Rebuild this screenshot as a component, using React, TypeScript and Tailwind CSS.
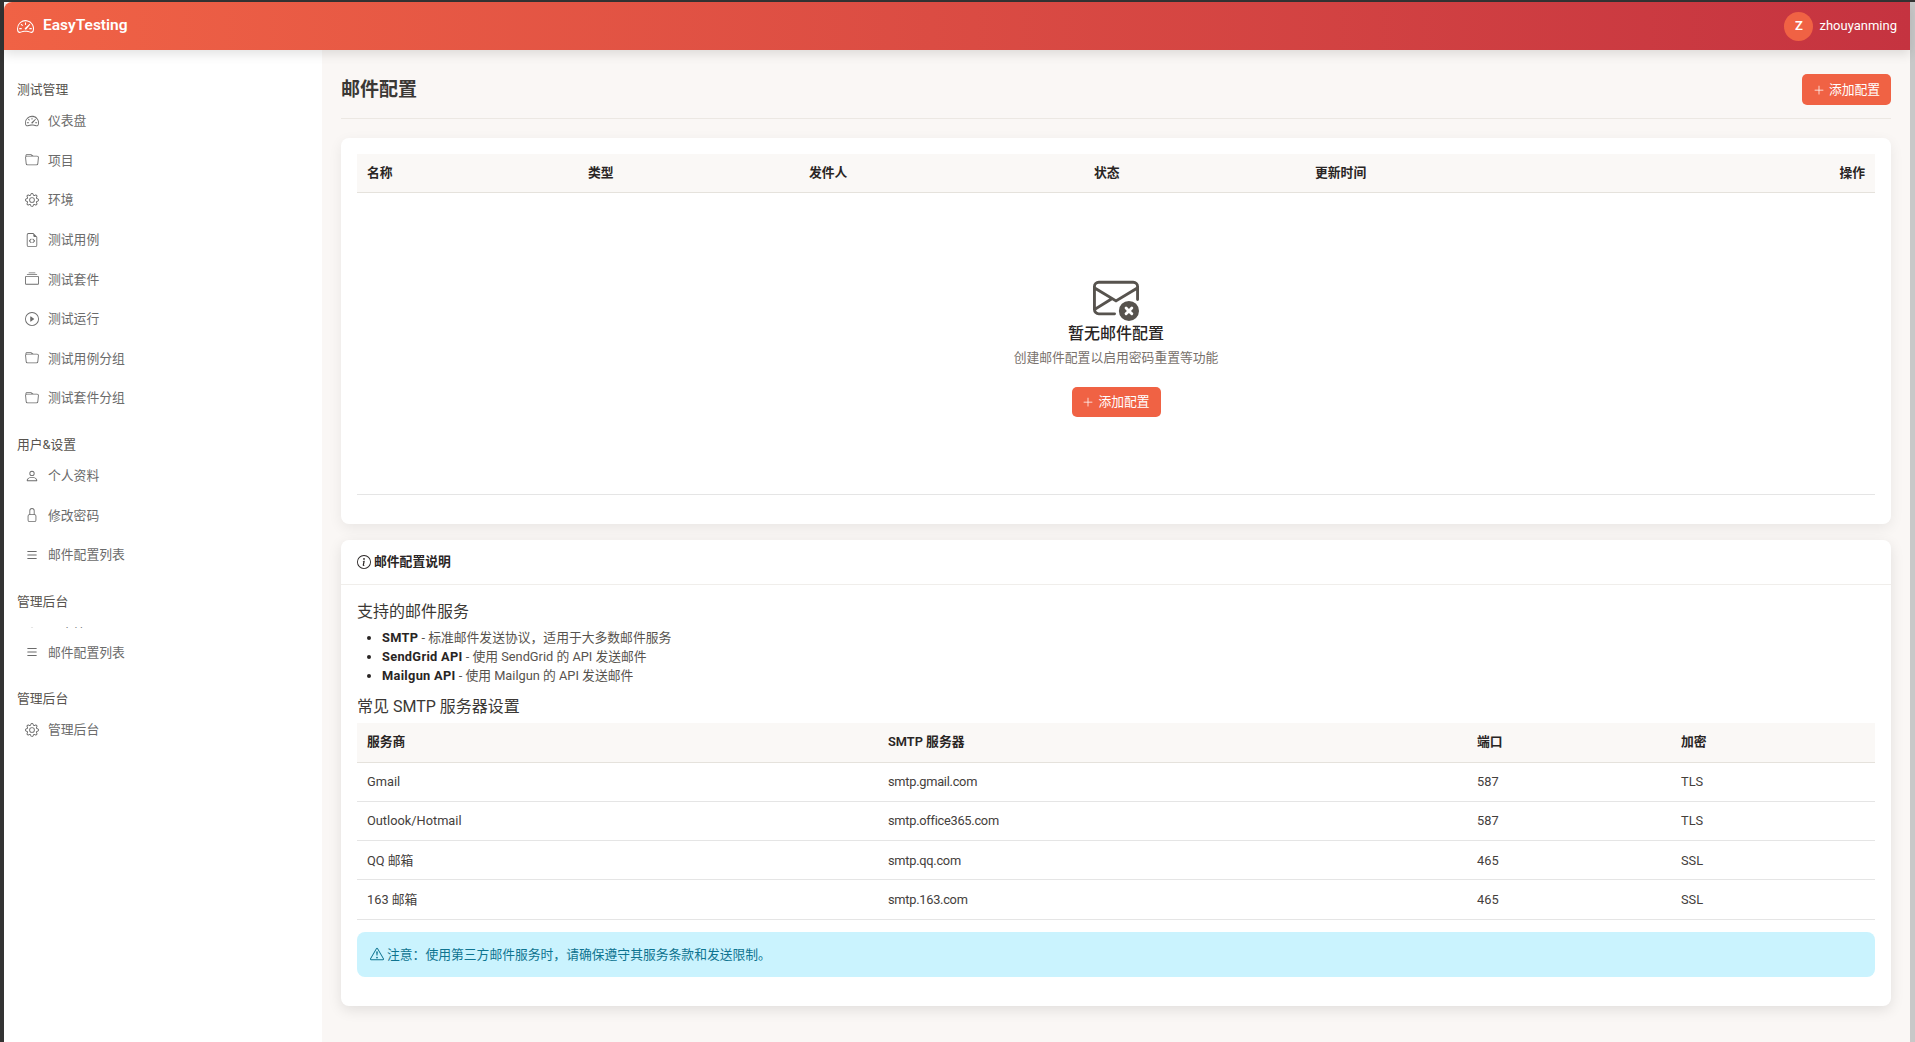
import React from "react";
import {
  BsSpeedometer2,
  BsFolder,
  BsGear,
  BsFileEarmarkCode,
  BsCollection,
  BsPlayCircle,
  BsPerson,
  BsLock,
  BsList,
  BsPlusLg,
  BsInfoCircle,
  BsExclamationTriangle,
  BsEnvelopeX,
} from "react-icons/bs";

type TNavItem = { icon: React.ReactNode; label: string };

const testNav: TNavItem[] = [
  { icon: <BsSpeedometer2 size={14} />, label: "仪表盘" },
  { icon: <BsFolder size={14} />, label: "项目" },
  { icon: <BsGear size={14} />, label: "环境" },
  { icon: <BsFileEarmarkCode size={14} />, label: "测试用例" },
  { icon: <BsCollection size={14} />, label: "测试套件" },
  { icon: <BsPlayCircle size={14} />, label: "测试运行" },
  { icon: <BsFolder size={14} />, label: "测试用例分组" },
  { icon: <BsFolder size={14} />, label: "测试套件分组" },
];

const userNav: TNavItem[] = [
  { icon: <BsPerson size={14} />, label: "个人资料" },
  { icon: <BsLock size={14} />, label: "修改密码" },
  { icon: <BsList size={14} />, label: "邮件配置列表" },
];

const smtpRows = [
  ["Gmail", "smtp.gmail.com", "587", "TLS"],
  ["Outlook/Hotmail", "smtp.office365.com", "587", "TLS"],
  ["QQ 邮箱", "smtp.qq.com", "465", "SSL"],
  ["163 邮箱", "smtp.163.com", "465", "SSL"],
];

const NavLabel: React.FC<{ text: string }> = ({ text }) => (
  <div className="h-[22px] leading-[22px] pl-[13px] text-[12.8px] text-[#57534e]">{text}</div>
);

const NavRow: React.FC<TNavItem> = ({ icon, label }) => (
  <div className="h-[39.6px] flex items-center pl-[21px] gap-[9px] text-[12.8px] text-[#6b6b6b]">
    <span className="w-[14px] flex justify-center shrink-0">{icon}</span>
    <span>{label}</span>
  </div>
);

const AddButton: React.FC<{ h: string }> = ({ h }) => (
  <button className={`${h} w-[89px] rounded-[5px] bg-[#f06244] text-white text-[12.8px] flex items-center justify-center gap-[4px]`}>
    <BsPlusLg size={12} />
    <span>添加配置</span>
  </button>
);

export default function App() {
  return (
    <div className="h-screen overflow-hidden bg-[#333333] pt-[2px] flex font-['Roboto','Noto_Sans_CJK_SC',sans-serif] text-[#292524]">
      <div className="w-[4px] shrink-0" />
      <div className="flex-1 min-w-0 flex flex-col bg-[#faf7f5]">
        <header className="relative z-10 h-[48px] shrink-0 rounded-tl-lg bg-gradient-to-r from-[#f06245] to-[#c53340] text-white flex items-center justify-between pl-[13px] pr-[13px] shadow-[0_4px_12px_rgba(0,0,0,0.12)]">
          <div className="flex items-center gap-[9px]">
            <BsSpeedometer2 size={17} />
            <span className="text-[15.5px] font-semibold">EasyTesting</span>
          </div>
          <div className="flex items-center gap-[6px]">
            <div className="w-[29px] h-[29px] rounded-full bg-[#f06244] flex items-center justify-center text-[13px] font-semibold">Z</div>
            <span className="text-[13px]">zhouyanming</span>
          </div>
        </header>

        <div className="flex-1 min-h-0 flex">
          <aside className="w-[318px] shrink-0 bg-white pt-[29px]">
            <NavLabel text="测试管理" />
            {testNav.map((item) => (
              <NavRow key={item.label} {...item} />
            ))}
            <div className="h-[16px]" />
            <NavLabel text="用户&设置" />
            {userNav.map((item) => (
              <NavRow key={item.label} {...item} />
            ))}
            <div className="h-[16.8px]" />
            <NavLabel text="管理后台" />
            <div className="h-[15px] overflow-hidden">
              <NavRow icon={<BsPerson size={14} />} label="用户管理" />
            </div>
            <div className="h-[4px]" />
            <NavRow icon={<BsList size={14} />} label="邮件配置列表" />
            <div className="h-[16px]" />
            <NavLabel text="管理后台" />
            <NavRow icon={<BsGear size={14} />} label="管理后台" />
          </aside>

          <main className="flex-1 min-w-0 px-[19px] pt-[24px]">
            <div className="h-[45px] flex justify-between items-start border-b border-[#ece8e3]">
              <h1 className="h-[32px] leading-[32px] text-[19px] font-semibold text-[#3b3835]">邮件配置</h1>
              <AddButton h="h-[31px]" />
            </div>

            <section className="mt-[19px] bg-white rounded-lg shadow-[0_4px_14px_rgba(0,0,0,0.07)] p-[16px] pb-[29px]">
              <table className="w-full table-fixed border-collapse text-[12.8px]">
                <colgroup>
                  <col className="w-[221px]" />
                  <col className="w-[221px]" />
                  <col className="w-[285px]" />
                  <col className="w-[221px]" />
                  <col />
                  <col className="w-[120px]" />
                </colgroup>
                <thead>
                  <tr className="h-[38px] bg-[#faf8f6] border-b border-[#e5e2dc] font-semibold">
                    <th className="pl-[10px] text-left font-semibold">名称</th>
                    <th className="pl-[10px] text-left font-semibold">类型</th>
                    <th className="pl-[10px] text-left font-semibold">发件人</th>
                    <th className="pl-[10px] text-left font-semibold">状态</th>
                    <th className="pl-[10px] text-left font-semibold">更新时间</th>
                    <th className="pr-[10px] text-right font-semibold">操作</th>
                  </tr>
                </thead>
                <tbody>
                  <tr className="border-b border-[#e5e5e5]">
                    <td colSpan={6} className="h-[302px] p-0">
                      <div className="flex flex-col items-center pt-[5px] text-center">
                        <BsEnvelopeX size={46} className="text-[#57534e]" />
                        <div className="mt-[1px] text-[16px] leading-[24px] font-medium">暂无邮件配置</div>
                        <div className="mt-[2px] text-[12.8px] leading-[20px] text-[#78716c]">创建邮件配置以启用密码重置等功能</div>
                        <div className="mt-[19px]">
                          <AddButton h="h-[30px]" />
                        </div>
                      </div>
                    </td>
                  </tr>
                </tbody>
              </table>
            </section>

            <section className="mt-[16px] bg-white rounded-lg shadow-[0_4px_14px_rgba(0,0,0,0.1)]">
              <div className="h-[45px] px-[16px] flex items-center gap-[3px] border-b border-[#f0eeeb] text-[12.8px] font-semibold">
                <BsInfoCircle size={14} />
                <span>邮件配置说明</span>
              </div>
              <div className="px-[16px] pt-[17px] pb-[29px]">
                <h3 className="text-[16px] leading-[20px] font-normal text-[#3b3835]">支持的邮件服务</h3>
                <ul className="mt-[6px] pl-[25px] list-disc text-[12.8px] leading-[19px] text-[#57534e] marker:text-[#292524]">
                  <li>
                    <strong className="font-bold tracking-[0.3px] text-[#292524]">SMTP</strong> - 标准邮件发送协议，适用于大多数邮件服务
                  </li>
                  <li>
                    <strong className="font-bold tracking-[0.3px] text-[#292524]">SendGrid API</strong> - 使用 SendGrid 的 API 发送邮件
                  </li>
                  <li>
                    <strong className="font-bold tracking-[0.3px] text-[#292524]">Mailgun API</strong> - 使用 Mailgun 的 API 发送邮件
                  </li>
                </ul>
                <h3 className="mt-[12px] text-[16px] leading-[20px] font-normal text-[#3b3835]">常见 SMTP 服务器设置</h3>
                <table className="mt-[6px] w-full table-fixed border-collapse text-[12.8px]">
                  <colgroup>
                    <col className="w-[521px]" />
                    <col className="w-[589px]" />
                    <col className="w-[204px]" />
                    <col />
                  </colgroup>
                  <thead>
                    <tr className="h-[39.5px] bg-[#faf8f6] border-b border-[#e5e2dc]">
                      <th className="pl-[10px] text-left font-semibold">服务商</th>
                      <th className="pl-[10px] text-left font-semibold">SMTP 服务器</th>
                      <th className="pl-[10px] text-left font-semibold">端口</th>
                      <th className="pl-[10px] text-left font-semibold">加密</th>
                    </tr>
                  </thead>
                  <tbody>
                    {smtpRows.map((row) => (
                      <tr key={row[0]} className="h-[39.3px] border-b border-[#e5e5e5]">
                        <td className="pl-[10px] text-[#44403c]">{row[0]}</td>
                        <td className="pl-[10px] text-[#44403c] tracking-[-0.26px]">{row[1]}</td>
                        <td className="pl-[10px] text-[#44403c]">{row[2]}</td>
                        <td className="pl-[10px] text-[#44403c]">{row[3]}</td>
                      </tr>
                    ))}
                  </tbody>
                </table>
                <div className="mt-[12px] h-[45px] rounded-lg bg-[#caf3fe] px-[13px] flex items-center gap-[3px] text-[12.8px] text-[#0e7490]">
                  <BsExclamationTriangle size={14} />
                  <span>注意：使用第三方邮件服务时，请确保遵守其服务条款和发送限制。</span>
                </div>
              </div>
            </section>
          </main>
        </div>
      </div>
      <div className="w-[5px] shrink-0 bg-[#c8c8c8]" />
    </div>
  );
}
